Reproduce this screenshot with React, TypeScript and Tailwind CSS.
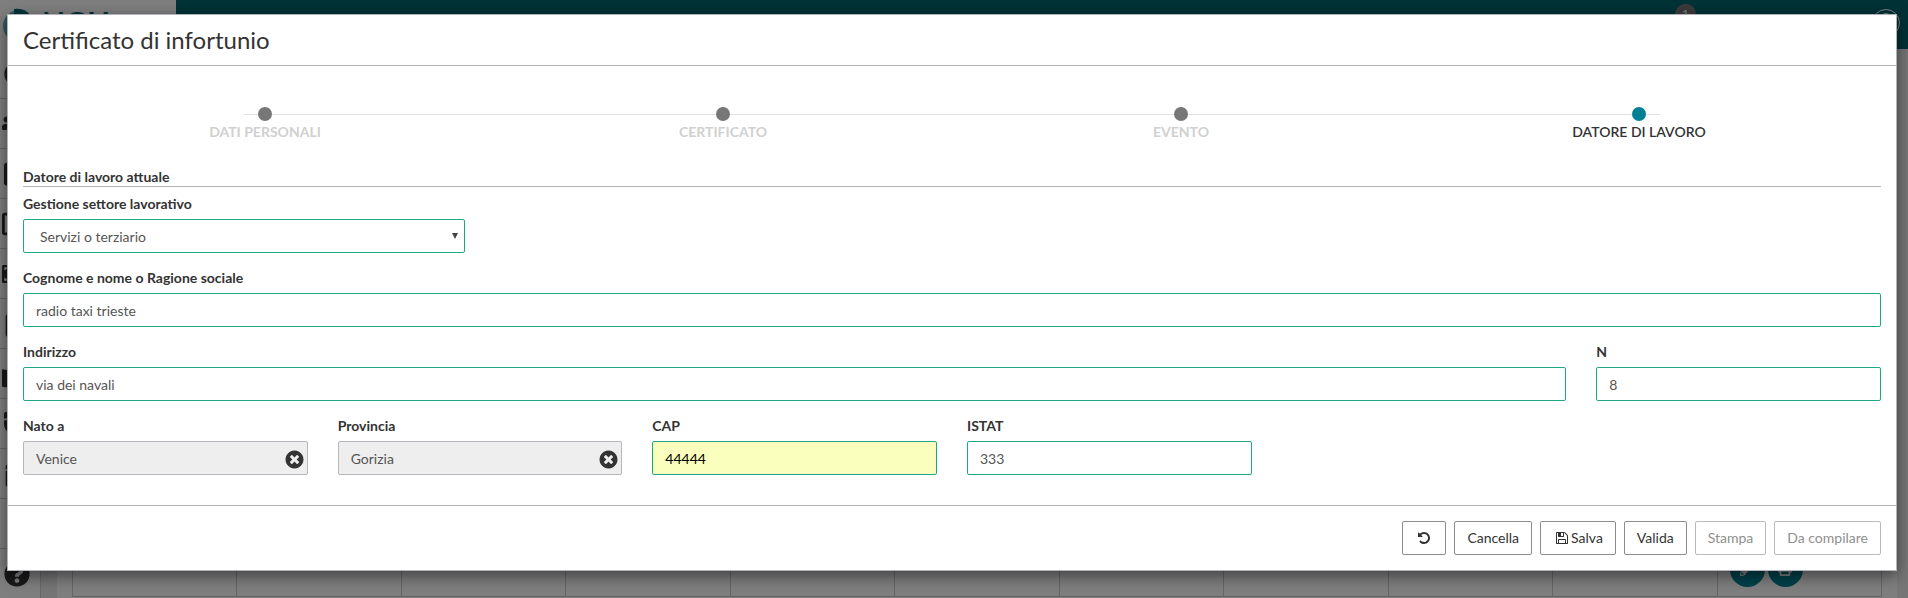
import React from "react";
import type { ReactNode } from "react";
import {
  FaCalendarAlt,
  FaPencilAlt,
  FaPrint,
  FaPuzzlePiece,
  FaQuestionCircle,
  FaRegCalendar,
  FaRegImage,
  FaTable,
  FaUsers,
  FaUserCircle,
  FaMoneyBill,
  FaMagnet,
} from "react-icons/fa";

const SAVE =
  "M512 1536h768v-384h-768v384zm896 0h128v-896q0-14-10-38.5t-20-34.5l-281-281q-10-10-34-20t-39-10v416q0 40-28 68t-68 28h-576q-40 0-68-28t-28-68v-416h-128v1280h128v-416q0-40 28-68t68-28h832q40 0 68 28t28 68v416zm-384-928v-320q0-13-9.5-22.5t-22.5-9.5h-192q-13 0-22.5 9.5t-9.5 22.5v320q0 13 9.5 22.5t22.5 9.5h192q13 0 22.5-9.5t9.5-22.5zm640 32v928q0 40-28 68t-68 28h-1344q-40 0-68-28t-28-68v-1344q0-40 28-68t68-28h928q40 0 88 20t76 48l280 280q28 28 48 76t20 88z";
const UNDO =
  "M1664 896q0 156-61 298t-164 245-245 164-298 61q-172 0-327-72.5t-264-204.5q-7-10-6.5-22.5t8.5-20.5l137-138q10-9 25-9 16 2 23 12 73 95 179 147t225 52q104 0 198.5-40.5t163.5-109.5 109.5-163.5 40.5-198.5-40.5-198.5-109.5-163.5-163.5-109.5-198.5-40.5q-98 0-188 35.5t-160 101.5l137 138q31 30 14 69-17 40-59 40h-448q-26 0-45-19t-19-45v-448q0-42 40-59 39-17 69 14l130 129q107-101 244.5-156.5t284.5-55.5q156 0 298 61t245 164 164 245 61 298z";
const CLEAR =
  "M1277 1122q0-26-19-45l-181-181 181-181q19-19 19-45 0-27-19-46l-90-90q-19-19-46-19-26 0-45 19l-181 181-181-181q-19-19-45-19-27 0-46 19l-90 90q-19 19-19 46 0 26 19 45l181 181-181 181q-19 19-19 45 0 27 19 46l90 90q19 19 46 19 26 0 45-19l181-181 181 181q19 19 45 19 27 0 46-19l90-90q19-19 19-46zm387-226q0 209-103 385.5t-279.5 279.5-385.5 103-385.5-103-279.5-279.5-103-385.5 103-385.5 279.5-279.5 385.5-103 385.5 103 279.5 279.5 103 385.5z";

function Glyph({ d, className }: { d: string; className: string }) {
  return (
    <svg viewBox="0 0 1792 1792" fill="currentColor" aria-hidden="true" className={className}>
      <path d={d} />
    </svg>
  );
}

const steps = ["Dati personali", "Certificato", "Evento", "Datore di lavoro"];

function Stepper() {
  return (
    <div className="relative mx-[13px]">
      <div className="absolute top-[7px] right-52 left-52 h-px bg-[#e0e0e0]" />
      <ol className="relative grid grid-cols-4">
        {steps.map((label, i) => {
          const active = i === steps.length - 1;
          return (
            <li key={label} className="flex flex-col items-center">
              <span className={active ? "size-3.5 rounded-full bg-[#008094]" : "size-3.5 rounded-full bg-[#777777]"} />
              <span
                className={
                  active
                    ? "mt-px font-semibold uppercase leading-5 text-[#333333]"
                    : "mt-px font-bold uppercase leading-5 text-[#d0d0d0]"
                }
              >
                {label}
              </span>
            </li>
          );
        })}
      </ol>
    </div>
  );
}

type FieldProps = {
  id: string;
  label: string;
  value: string;
  className?: string;
  kind?: "normal" | "autofill" | "locked";
};

const inputStyles = {
  normal: "border-[#1fa884] bg-white text-[#555555]",
  autofill: "border-[#1fa884] bg-[#faffbd] text-black",
  locked: "border-[#b9b5bc] bg-[#eeeeee] text-[#555555]",
};

function Field({ id, label, value, className = "", kind = "normal" }: FieldProps) {
  return (
    <div className={className}>
      <label htmlFor={id} className="mb-[5px] block font-bold leading-5">
        {label}
      </label>
      <div className="relative">
        <input
          id={id}
          defaultValue={value}
          readOnly={kind === "locked"}
          className={`block h-[34px] w-full rounded-xs border px-3 outline-none ${inputStyles[kind]}`}
        />
        {kind === "locked" && (
          <button type="button" aria-label={`Svuota ${label}`} className="absolute top-2 right-[3px] text-[#333333]">
            <Glyph d={CLEAR} className="block size-[21px]" />
          </button>
        )}
      </div>
    </div>
  );
}

function ActionButton({ children, disabled, label }: { children: ReactNode; disabled?: boolean; label?: string }) {
  return (
    <button
      type="button"
      disabled={disabled}
      aria-label={label}
      className="flex h-[34px] items-center rounded-xs border border-[#8c8c8c] px-3 text-[#333333] disabled:border-[#bababa] disabled:text-[#8f8f8f]"
    >
      {children}
    </button>
  );
}

const menu = [
  FaUserCircle,
  FaUsers,
  FaTable,
  FaRegImage,
  FaMoneyBill,
  FaRegCalendar,
  FaPuzzlePiece,
  FaMagnet,
  FaCalendarAlt,
  null,
  FaQuestionCircle,
];

function Background() {
  return (
    <div className="flex h-full flex-col bg-[#ededed]" aria-hidden="true">
      <div className="flex h-[49px] shrink-0 bg-[#00656c]">
        <div className="flex w-44 items-start bg-white pt-2 pl-0.5">
          <svg viewBox="0 0 34 34" className="size-[34px]">
            <circle cx="17" cy="18" r="16" fill="#5fb3bb" />
            <path d="M12 1a17 17 0 0 1 20 17H12z" fill="#006a72" />
          </svg>
          <span className="pl-1.5 text-3xl font-bold leading-7 text-[#00656c]">NGH</span>
        </div>
        <div className="flex flex-1 items-start justify-end gap-44 pr-2">
          <span className="mt-1 h-5 w-[21px] rounded-full bg-[#777777] text-center text-xs leading-5 text-white">1</span>
          <svg viewBox="0 0 28 28" className="mt-[9px] size-7" fill="none" stroke="white">
            <circle cx="14" cy="14" r="13.5" />
            <circle cx="14" cy="10" r="5.5" />
          </svg>
        </div>
      </div>
      <div className="flex min-h-0 flex-1">
        <div className="w-[41px] shrink-0 overflow-hidden border-r border-[#d0d0d0] bg-white">
          {menu.map((Icon, i) => (
            <div key={i} className="flex h-[50px] items-center border-b border-[#d0d0d0] text-[#333333]">
              <span className="flex w-[34px] justify-center">
                {Icon && <Icon className={[1, 3, 4, 6].includes(i) ? "size-[30px]" : "size-[26px]"} />}
              </span>
            </div>
          ))}
        </div>
        <div className="mr-[11px] ml-4 flex flex-1 flex-col justify-end bg-white px-[15px] pb-px">
          <div className="grid h-[55px] grid-cols-11 border-b border-l border-[#cccccc]">
            {Array.from({ length: 11 }, (_, i) => (
              <div key={i} className="flex items-center gap-[3px] border-r border-[#cccccc] pl-3">
                {i === 10 && (
                  <>
                    <span className="flex size-[35px] items-center justify-center rounded-full bg-[#008094] text-white">
                      <FaPencilAlt />
                    </span>
                    <span className="flex size-[35px] items-center justify-center rounded-full bg-[#008094] text-white">
                      <FaPrint />
                    </span>
                  </>
                )}
              </div>
            ))}
          </div>
        </div>
      </div>
    </div>
  );
}

export default function App() {
  return (
    <div className="relative h-screen overflow-hidden font-['Lato',sans-serif] text-sm text-[#333333]">
      <Background />
      <div className="absolute inset-0 overflow-y-auto bg-black/50">
        <section
          role="dialog"
          aria-labelledby="title"
          className="mt-3.5 mr-[11px] ml-[7px] border border-[#b4b2b8] bg-white shadow-[0_5px_15px_rgba(0,0,0,0.5)]"
        >
          <header className="border-b border-[#b4b4b4] px-[15px] py-[9px]">
            <h1 id="title" className="text-2xl leading-8">
              Certificato di infortunio
            </h1>
          </header>
          <form className="px-[15px] pt-[41px] pb-[30px]">
            <Stepper />
            <h2 className="mt-[26px] border-b border-[#b4b2b8] font-bold leading-[18px]">Datore di lavoro attuale</h2>
            <div className="mt-[7px] grid grid-cols-4 gap-x-[30px]">
              <div>
                <label htmlFor="settore" className="mb-[5px] block font-bold leading-5">
                  Gestione settore lavorativo
                </label>
                <div className="relative">
                  <select
                    id="settore"
                    className="block h-[34px] w-full appearance-none rounded-xs border border-[#1fa884] bg-white px-4 pt-0.5 text-[#555555] outline-none"
                  >
                    <option>Servizi o terziario</option>
                  </select>
                  <svg
                    viewBox="0 0 6 6"
                    className="pointer-events-none absolute top-3.5 right-[7px] size-1.5 text-[#444444]"
                    fill="currentColor"
                  >
                    <path d="M0 0h6L3 6z" />
                  </svg>
                </div>
              </div>
            </div>
            <div className="mt-[15px] grid grid-cols-6 gap-x-[30px] gap-y-[15px]">
              <Field id="nome" label="Cognome e nome o Ragione sociale" value="radio taxi trieste" className="col-span-6" />
              <Field id="indirizzo" label="Indirizzo" value="via dei navali" className="col-span-5" />
              <Field id="numero" label="N" value="8" />
              <Field id="nato" label="Nato a" value="Venice" kind="locked" />
              <Field id="provincia" label="Provincia" value="Gorizia" kind="locked" />
              <Field id="cap" label="CAP" value="44444" kind="autofill" />
              <Field id="istat" label="ISTAT" value="333" />
            </div>
          </form>
          <footer className="flex justify-end gap-2 border-t border-[#b4b4b4] p-[15px]">
            <ActionButton label="Ripristina">
              <Glyph d={UNDO} className="mx-0.5 size-3.5" />
            </ActionButton>
            <ActionButton>Cancella</ActionButton>
            <ActionButton>
              <Glyph d={SAVE} className="mr-0.5 ml-0.5 size-3.5" />
              Salva
            </ActionButton>
            <ActionButton>Valida</ActionButton>
            <ActionButton disabled>Stampa</ActionButton>
            <ActionButton disabled>Da compilare</ActionButton>
          </footer>
        </section>
      </div>
    </div>
  );
}
